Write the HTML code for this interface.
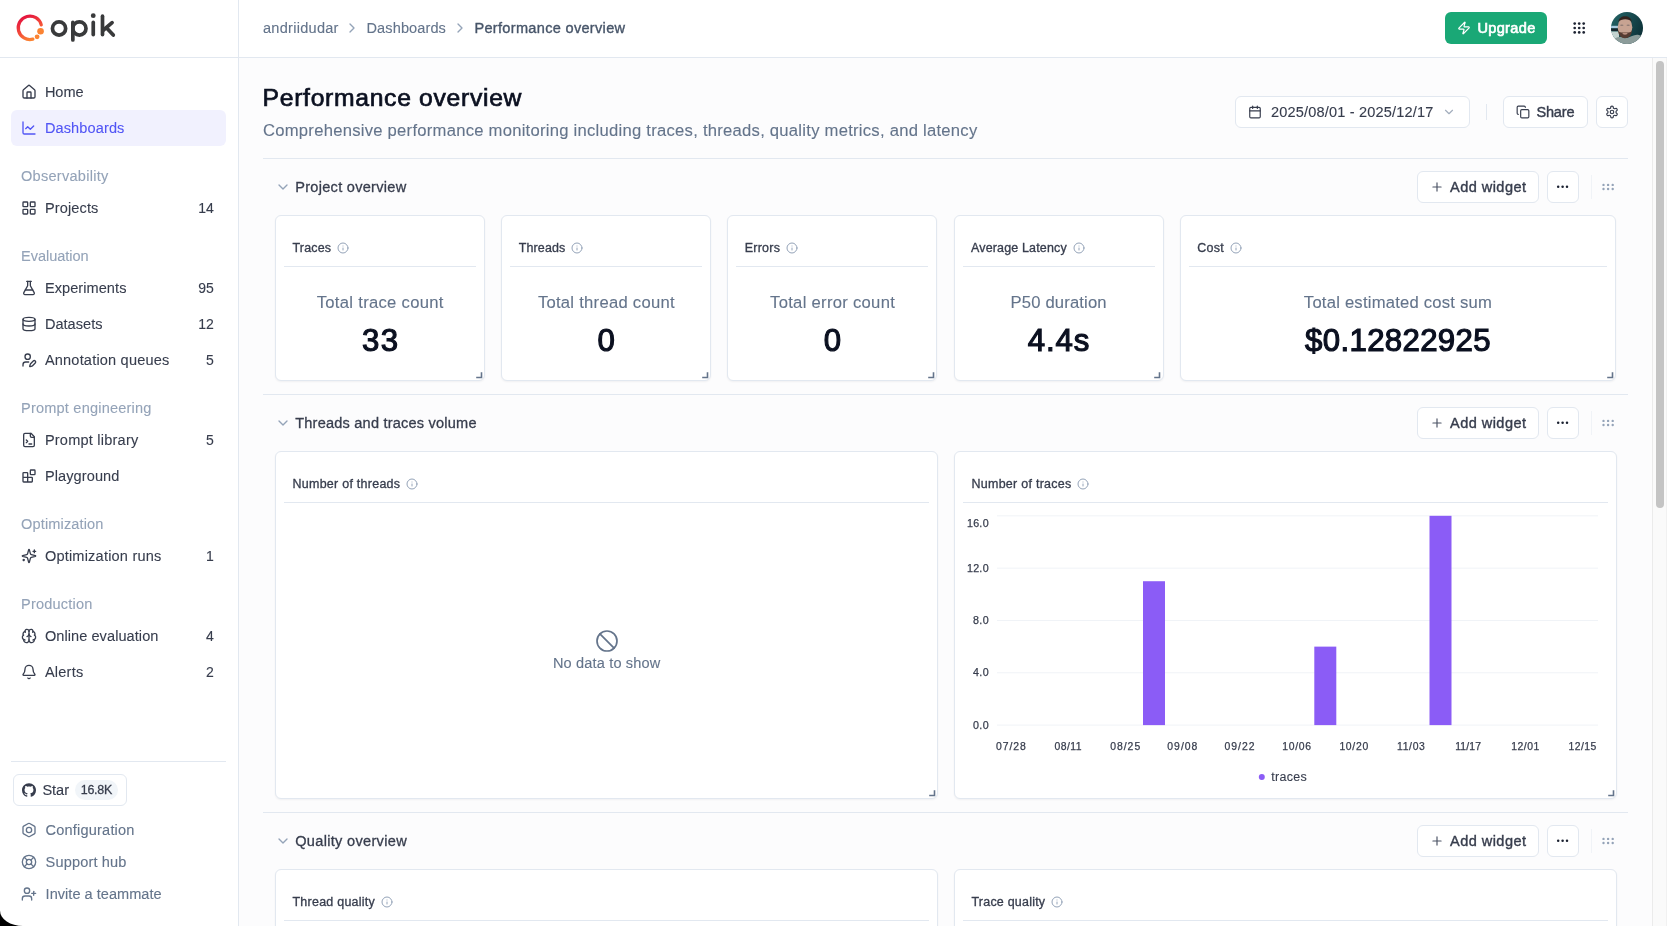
<!DOCTYPE html>
<html lang="en"><head><meta charset="utf-8"><title>Opik - Performance overview</title>
<style>
html,body{margin:0;padding:0;background:#fff}
body{width:1667px;height:926px;overflow:hidden;position:relative;font-family:"Liberation Sans",sans-serif}
.b,.i,.t{position:absolute;box-sizing:border-box}
.i{overflow:visible}
.t{white-space:pre;line-height:20px;height:20px;font-family:"Liberation Sans",sans-serif}
</style></head>
<body>
<div class="b" style="left:239px;top:58px;width:1428px;height:868px;background:#fcfcfd"></div>
<div class="b" style="left:0px;top:57px;width:1667px;height:1px;background:#e2e8f0"></div>
<div class="b" style="left:238px;top:0px;width:1px;height:926px;background:#e2e8f0"></div>
<svg class="i" style="left:0;top:0" width="239" height="57" viewBox="0 0 239 57">
<defs><linearGradient id="lg" x1="0.15" y1="0.1" x2="0.6" y2="1"><stop offset="0" stop-color="#e5173f"/><stop offset="0.5" stop-color="#f2473a"/><stop offset="1" stop-color="#fb8332"/></linearGradient></defs>
<path d="M 41.25 24.9 A 11.7 11.7 0 1 0 32.9 39.1" fill="none" stroke="url(#lg)" stroke-width="3.25" stroke-linecap="round"/>
<circle cx="40.55" cy="31.25" r="3.3" fill="#fb8332"/>
<circle cx="37.1" cy="36.85" r="2.4" fill="#fb8332"/>
<g fill="none" stroke="#393a3b" stroke-width="3.7" stroke-linecap="round" stroke-linejoin="round">
<circle cx="59.05" cy="28.45" r="6.6"/>
<circle cx="79.4" cy="28.45" r="6.6"/>
<path d="M72.85 22.4 V40.0"/>
<path d="M93.25 22.4 V34.6"/>
<path d="M102.5 16.2 V34.6"/>
<path d="M112.1 22.6 L102.9 30.5 M106.4 27.7 L113.3 35.1"/>
</g>
<circle cx="93.25" cy="15.7" r="2.4" fill="#393a3b"/>
</svg>
<svg class="i" style="left:21.00px;top:84.00px" width="16" height="16" viewBox="0 0 24 24" fill="none" stroke="#373d4d" stroke-width="2" stroke-linecap="round" stroke-linejoin="round"><path d="M15 21v-8a1 1 0 0 0-1-1h-4a1 1 0 0 0-1 1v8"/><path d="M3 10a2 2 0 0 1 .709-1.528l7-5.999a2 2 0 0 1 2.582 0l7 5.999A2 2 0 0 1 21 10v9a2 2 0 0 1-2 2H5a2 2 0 0 1-2-2z"/></svg>
<div class="b" style="left:11px;top:110px;width:215px;height:36px;background:#f1f1fe;border-radius:6px;"></div>
<svg class="i" style="left:21.00px;top:120.00px" width="16" height="16" viewBox="0 0 24 24" fill="none" stroke="#5155f5" stroke-width="2" stroke-linecap="round" stroke-linejoin="round"><path d="M3 3v16a2 2 0 0 0 2 2h16"/><path d="m19 9-5 5-4-4-3 3"/></svg>
<svg class="i" style="left:21.00px;top:200.00px" width="16" height="16" viewBox="0 0 24 24" fill="none" stroke="#373d4d" stroke-width="2" stroke-linecap="round" stroke-linejoin="round"><rect width="7" height="7" x="3" y="3" rx="1"/><rect width="7" height="7" x="14" y="3" rx="1"/><rect width="7" height="7" x="14" y="14" rx="1"/><rect width="7" height="7" x="3" y="14" rx="1"/></svg>
<svg class="i" style="left:21.00px;top:280.00px" width="16" height="16" viewBox="0 0 24 24" fill="none" stroke="#373d4d" stroke-width="2" stroke-linecap="round" stroke-linejoin="round"><path d="M14 2v6a2 2 0 0 0 .245.96l5.51 10.08A2 2 0 0 1 18 22H6a2 2 0 0 1-1.755-2.96l5.51-10.08A2 2 0 0 0 10 8V2"/><path d="M6.453 15h11.094"/><path d="M8.5 2h7"/></svg>
<svg class="i" style="left:21.00px;top:316.00px" width="16" height="16" viewBox="0 0 24 24" fill="none" stroke="#373d4d" stroke-width="2" stroke-linecap="round" stroke-linejoin="round"><ellipse cx="12" cy="5" rx="9" ry="3"/><path d="M3 5V19A9 3 0 0 0 21 19V5"/><path d="M3 12A9 3 0 0 0 21 12"/></svg>
<svg class="i" style="left:21.00px;top:352.00px" width="16" height="16" viewBox="0 0 24 24" fill="none" stroke="#373d4d" stroke-width="2" stroke-linecap="round" stroke-linejoin="round"><path d="M11.5 15H7a4 4 0 0 0-4 4v2"/><path d="M21.378 16.626a1 1 0 0 0-3.004-3.004l-4.01 4.012a2 2 0 0 0-.506.854l-.837 2.87a.5.5 0 0 0 .62.62l2.87-.837a2 2 0 0 0 .854-.506z"/><circle cx="10" cy="7" r="4"/></svg>
<svg class="i" style="left:21.00px;top:432.00px" width="16" height="16" viewBox="0 0 24 24" fill="none" stroke="#373d4d" stroke-width="2" stroke-linecap="round" stroke-linejoin="round"><path d="M15 2H6a2 2 0 0 0-2 2v16a2 2 0 0 0 2 2h12a2 2 0 0 0 2-2V7Z"/><path d="M14 2v4a2 2 0 0 0 2 2h4"/><path d="m8 16 2-2-2-2"/><path d="M12 18h4"/></svg>
<svg class="i" style="left:21.00px;top:468.00px" width="16" height="16" viewBox="0 0 24 24" fill="none" stroke="#373d4d" stroke-width="2" stroke-linecap="round" stroke-linejoin="round"><rect width="7" height="7" x="14" y="3" rx="1"/><path d="M10 21V8a1 1 0 0 0-1-1H4a1 1 0 0 0-1 1v12a1 1 0 0 0 1 1h12a1 1 0 0 0 1-1v-5a1 1 0 0 0-1-1H3"/></svg>
<svg class="i" style="left:21.00px;top:548.00px" width="16" height="16" viewBox="0 0 24 24" fill="none" stroke="#373d4d" stroke-width="2" stroke-linecap="round" stroke-linejoin="round"><path d="M9.937 15.5A2 2 0 0 0 8.5 14.063l-6.135-1.582a.5.5 0 0 1 0-.962L8.5 9.936A2 2 0 0 0 9.937 8.5l1.582-6.135a.5.5 0 0 1 .963 0L14.063 8.5A2 2 0 0 0 15.5 9.937l6.135 1.581a.5.5 0 0 1 0 .964L15.5 14.063a2 2 0 0 0-1.437 1.437l-1.582 6.135a.5.5 0 0 1-.963 0z"/><path d="M20 3v4"/><path d="M22 5h-4"/><path d="M4 17v2"/><path d="M5 18H3"/></svg>
<svg class="i" style="left:21.00px;top:628.00px" width="16" height="16" viewBox="0 0 24 24" fill="none" stroke="#373d4d" stroke-width="2" stroke-linecap="round" stroke-linejoin="round"><path d="M12 18V5"/><path d="M15 13a4.17 4.17 0 0 1-3-4 4.17 4.17 0 0 1-3 4"/><path d="M17.598 6.5A3 3 0 1 0 12 5a3 3 0 1 0-5.598 1.5"/><path d="M17.997 5.125a4 4 0 0 1 2.526 5.77"/><path d="M18 18a4 4 0 0 0 2-7.464"/><path d="M19.967 17.483A4 4 0 1 1 12 18a4 4 0 1 1-7.967-.517"/><path d="M6 18a4 4 0 0 1-2-7.464"/><path d="M6.003 5.125a4 4 0 0 0-2.526 5.77"/></svg>
<svg class="i" style="left:21.00px;top:664.00px" width="16" height="16" viewBox="0 0 24 24" fill="none" stroke="#373d4d" stroke-width="2" stroke-linecap="round" stroke-linejoin="round"><path d="M10.268 21a2 2 0 0 0 3.464 0"/><path d="M3.262 15.326A1 1 0 0 0 4 17h16a1 1 0 0 0 .74-1.673C19.41 13.956 18 12.499 18 8A6 6 0 0 0 6 8c0 4.499-1.411 5.956-2.738 7.326"/></svg>
<div class="b" style="left:11px;top:761px;width:215px;height:1px;background:#e2e8f0"></div>
<div class="b" style="left:13px;top:774px;width:114px;height:32px;background:#fff;border:1px solid #e2e8f0;border-radius:6px;"></div>
<svg class="i" style="left:22px;top:783px" width="14" height="14" viewBox="0 0 24 24"><path fill="#373d4d" d="M12 .297c-6.63 0-12 5.373-12 12 0 5.303 3.438 9.8 8.205 11.385.6.113.82-.258.82-.577 0-.285-.01-1.04-.015-2.04-3.338.724-4.042-1.61-4.042-1.61C4.422 18.07 3.633 17.7 3.633 17.7c-1.087-.744.084-.729.084-.729 1.205.084 1.838 1.236 1.838 1.236 1.07 1.835 2.809 1.305 3.495.998.108-.776.417-1.305.76-1.605-2.665-.3-5.466-1.332-5.466-5.93 0-1.31.465-2.38 1.235-3.22-.135-.303-.54-1.523.105-3.176 0 0 1.005-.322 3.3 1.23.96-.267 1.98-.399 3-.405 1.02.006 2.04.138 3 .405 2.28-1.552 3.285-1.23 3.285-1.23.645 1.653.24 2.873.12 3.176.765.84 1.23 1.91 1.23 3.22 0 4.61-2.805 5.625-5.475 5.92.42.36.81 1.096.81 2.22 0 1.606-.015 2.896-.015 3.286 0 .315.21.69.825.57C20.565 22.092 24 17.592 24 12.297c0-6.627-5.373-12-12-12"/></svg>
<div class="b" style="left:75px;top:780px;width:43px;height:20px;background:#f1f5f9;border-radius:10px;"></div>
<svg class="i" style="left:21.00px;top:822.00px" width="16" height="16" viewBox="0 0 24 24" fill="none" stroke="#64748b" stroke-width="2" stroke-linecap="round" stroke-linejoin="round"><path d="M21 16V8a2 2 0 0 0-1-1.73l-7-4a2 2 0 0 0-2 0l-7 4A2 2 0 0 0 3 8v8a2 2 0 0 0 1 1.73l7 4a2 2 0 0 0 2 0l7-4A2 2 0 0 0 21 16z"/><circle cx="12" cy="12" r="4"/></svg>
<svg class="i" style="left:21.00px;top:854.00px" width="16" height="16" viewBox="0 0 24 24" fill="none" stroke="#64748b" stroke-width="2" stroke-linecap="round" stroke-linejoin="round"><circle cx="12" cy="12" r="10"/><path d="m4.93 4.93 4.24 4.24"/><path d="m14.83 9.17 4.24-4.24"/><path d="m14.83 14.83 4.24 4.24"/><path d="m9.17 14.83-4.24 4.24"/><circle cx="12" cy="12" r="4"/></svg>
<svg class="i" style="left:21.00px;top:886.00px" width="16" height="16" viewBox="0 0 24 24" fill="none" stroke="#64748b" stroke-width="2" stroke-linecap="round" stroke-linejoin="round"><path d="M16 21v-2a4 4 0 0 0-4-4H6a4 4 0 0 0-4 4v2"/><circle cx="9" cy="7" r="4"/><line x1="19" x2="19" y1="8" y2="14"/><line x1="22" x2="16" y1="11" y2="11"/></svg>
<svg class="i" style="left:344.20px;top:20.00px" width="16" height="16" viewBox="0 0 24 24" fill="none" stroke="#94a3b8" stroke-width="2" stroke-linecap="round" stroke-linejoin="round"><path d="m9 18 6-6-6-6"/></svg>
<svg class="i" style="left:452.10px;top:20.00px" width="16" height="16" viewBox="0 0 24 24" fill="none" stroke="#94a3b8" stroke-width="2" stroke-linecap="round" stroke-linejoin="round"><path d="m9 18 6-6-6-6"/></svg>
<div class="b" style="left:1445px;top:12px;width:102px;height:32px;background:#1aa876;border-radius:6px;"></div>
<svg class="i" style="left:1457.00px;top:21.00px" width="14" height="14" viewBox="0 0 24 24" fill="none" stroke="#fff" stroke-width="2" stroke-linecap="round" stroke-linejoin="round"><path d="M4 14a1 1 0 0 1-.78-1.63l9.9-10.2a.5.5 0 0 1 .86.46l-1.92 6.02A1 1 0 0 0 13 10h7a1 1 0 0 1 .78 1.63l-9.9 10.2a.5.5 0 0 1-.86-.46l1.92-6.02A1 1 0 0 0 11 14z"/></svg>
<svg class="i" style="left:0;top:0" width="1667" height="57"><circle cx="1574.7" cy="23.6" r="1.35" fill="#1e2433"/><circle cx="1574.7" cy="28.0" r="1.35" fill="#1e2433"/><circle cx="1574.7" cy="32.4" r="1.35" fill="#1e2433"/><circle cx="1579.2" cy="23.6" r="1.35" fill="#1e2433"/><circle cx="1579.2" cy="28.0" r="1.35" fill="#1e2433"/><circle cx="1579.2" cy="32.4" r="1.35" fill="#1e2433"/><circle cx="1583.7" cy="23.6" r="1.35" fill="#1e2433"/><circle cx="1583.7" cy="28.0" r="1.35" fill="#1e2433"/><circle cx="1583.7" cy="32.4" r="1.35" fill="#1e2433"/></svg>
<svg class="i" style="left:1611px;top:12px" width="32" height="32" viewBox="0 0 32 32">
<defs><clipPath id="av"><circle cx="16" cy="16" r="16"/></clipPath>
<filter id="bl" x="-20%" y="-20%" width="140%" height="140%"><feGaussianBlur stdDeviation="0.7"/></filter>
<linearGradient id="avbg" x1="0" y1="0.2" x2="1" y2="0.6"><stop offset="0" stop-color="#236163"/><stop offset="0.55" stop-color="#174a4f"/><stop offset="1" stop-color="#0d3238"/></linearGradient></defs>
<g clip-path="url(#av)">
<rect width="32" height="32" fill="url(#avbg)"/>
<g filter="url(#bl)">
<rect x="-2" y="13.8" width="9.5" height="2.6" fill="#a9cbe0"/>
<rect x="-2" y="16.4" width="9.5" height="2.6" fill="#13272e"/>
<path d="M-2 19.5 H8 V27 L-2 30 Z" fill="#c3d3d0"/>
<path d="M-2 34 L4 26.5 C8 24 12 25.5 16 26 C20 25 23 22.3 27 22.8 L34 25 V34 Z" fill="#8c9c9a"/>
<ellipse cx="14" cy="15.2" rx="7.3" ry="10" fill="#c7a392"/>
<path d="M7.4 10 C7.6 2.2 20.4 2.2 20.8 10 C18.5 6.4 10 6.4 7.4 10 Z" fill="#33241f"/>
<path d="M7.0 18 C7.2 29 20.8 29 21 18 C19.5 21.6 17.5 20.2 14 20.2 C10.5 20.2 8.5 21.6 7.0 18 Z" fill="#553b30"/>
<ellipse cx="14" cy="21.6" rx="2.6" ry="1.1" fill="#b98f80"/>
<ellipse cx="10.8" cy="13.2" rx="1.7" ry="0.8" fill="#8e7a74"/>
<ellipse cx="17.2" cy="13.2" rx="1.7" ry="0.8" fill="#8e7a74"/>
</g>
</g></svg>
<div class="b" style="left:1235px;top:96px;width:235px;height:32px;background:#fff;border:1px solid #e2e8f0;border-radius:6px;"></div>
<svg class="i" style="left:1248.00px;top:105.00px" width="14" height="14" viewBox="0 0 24 24" fill="none" stroke="#373d4d" stroke-width="2" stroke-linecap="round" stroke-linejoin="round"><path d="M8 2v4"/><path d="M16 2v4"/><rect width="18" height="18" x="3" y="4" rx="2"/><path d="M3 10h18"/></svg>
<svg class="i" style="left:1442.00px;top:105.00px" width="14" height="14" viewBox="0 0 24 24" fill="none" stroke="#a3aebd" stroke-width="2" stroke-linecap="round" stroke-linejoin="round"><path d="m6 9 6 6 6-6"/></svg>
<div class="b" style="left:1486px;top:104px;width:1px;height:16px;background:#e2e8f0"></div>
<div class="b" style="left:1503px;top:96px;width:85px;height:32px;background:#fff;border:1px solid #e2e8f0;border-radius:6px;"></div>
<svg class="i" style="left:1515.60px;top:105.00px" width="14" height="14" viewBox="0 0 24 24" fill="none" stroke="#373d4d" stroke-width="2" stroke-linecap="round" stroke-linejoin="round"><rect width="14" height="14" x="8" y="8" rx="2" ry="2"/><path d="M4 16c-1.1 0-2-.9-2-2V4c0-1.1.9-2 2-2h10c1.1 0 2 .9 2 2"/></svg>
<div class="b" style="left:1596px;top:96px;width:32px;height:32px;background:#fff;border:1px solid #e2e8f0;border-radius:6px;"></div>
<svg class="i" style="left:1604.50px;top:105.00px" width="14" height="14" viewBox="0 0 24 24" fill="none" stroke="#373d4d" stroke-width="2" stroke-linecap="round" stroke-linejoin="round"><path d="M12.22 2h-.44a2 2 0 0 0-2 2v.18a2 2 0 0 1-1 1.73l-.43.25a2 2 0 0 1-2 0l-.15-.08a2 2 0 0 0-2.73.73l-.22.38a2 2 0 0 0 .73 2.73l.15.1a2 2 0 0 1 1 1.72v.51a2 2 0 0 1-1 1.74l-.15.09a2 2 0 0 0-.73 2.73l.22.38a2 2 0 0 0 2.73.73l.15-.08a2 2 0 0 1 2 0l.43.25a2 2 0 0 1 1 1.73V20a2 2 0 0 0 2 2h.44a2 2 0 0 0 2-2v-.18a2 2 0 0 1 1-1.73l.43-.25a2 2 0 0 1 2 0l.15.08a2 2 0 0 0 2.73-.73l.22-.39a2 2 0 0 0-.73-2.73l-.15-.08a2 2 0 0 1-1-1.74v-.5a2 2 0 0 1 1-1.74l.15-.09a2 2 0 0 0 .73-2.73l-.22-.38a2 2 0 0 0-2.73-.73l-.15.08a2 2 0 0 1-2 0l-.43-.25a2 2 0 0 1-1-1.73V4a2 2 0 0 0-2-2z"/><circle cx="12" cy="12" r="3"/></svg>
<div class="b" style="left:263px;top:158px;width:1365px;height:1px;background:#e2e8f0"></div>
<svg class="i" style="left:275.20px;top:179.00px" width="16" height="16" viewBox="0 0 24 24" fill="none" stroke="#94a3b8" stroke-width="2" stroke-linecap="round" stroke-linejoin="round"><path d="m6 9 6 6 6-6"/></svg>
<div class="b" style="left:1417px;top:171px;width:122px;height:32px;background:#fff;border:1px solid #e2e8f0;border-radius:6px;"></div>
<svg class="i" style="left:1430.00px;top:180.00px" width="14" height="14" viewBox="0 0 24 24" fill="none" stroke="#4b5264" stroke-width="2" stroke-linecap="round" stroke-linejoin="round"><path d="M5 12h14"/><path d="M12 5v14"/></svg>
<div class="b" style="left:1547px;top:171px;width:32px;height:32px;background:#fff;border:1px solid #e2e8f0;border-radius:6px;"></div>
<div class="b" style="left:1591px;top:175px;width:1px;height:24px;background:#f0f3f7"></div>
<svg class="i" style="left:0;top:0" width="1667" height="926"><circle cx="1558.2" cy="186.8" r="1.25" fill="#1a2030"/><circle cx="1562.6" cy="186.8" r="1.25" fill="#1a2030"/><circle cx="1567.0" cy="186.8" r="1.25" fill="#1a2030"/><circle cx="1603.5" cy="184.9" r="1.2" fill="#94a3b8"/><circle cx="1603.5" cy="189.0" r="1.2" fill="#94a3b8"/><circle cx="1608.1" cy="184.9" r="1.2" fill="#94a3b8"/><circle cx="1608.1" cy="189.0" r="1.2" fill="#94a3b8"/><circle cx="1612.7" cy="184.9" r="1.2" fill="#94a3b8"/><circle cx="1612.7" cy="189.0" r="1.2" fill="#94a3b8"/></svg>
<div class="b" style="left:275.0px;top:215px;width:210.17px;height:166px;background:#fff;border:1px solid #e2e8f0;border-radius:6px;box-sizing:border-box;box-shadow:0 1px 2px rgba(15,23,42,0.05);"></div>
<svg class="i" style="left:337.10px;top:241.80px" width="12" height="12" viewBox="0 0 24 24" fill="none" stroke="#94a3b8" stroke-width="2" stroke-linecap="round" stroke-linejoin="round"><circle cx="12" cy="12" r="10"/><path d="M12 16v-4"/><path d="M12 8h.01"/></svg>
<div class="b" style="left:284.0px;top:266px;width:192.17px;height:1px;background:#e2e8f0"></div>
<svg class="i" style="left:472.77px;top:368.60px" width="10" height="10" viewBox="0 0 10 10"><path d="M8.5 3.2 V8.5 H3.2" fill="none" stroke="#64748b" stroke-width="1.6"/></svg>
<div class="b" style="left:501.16999999999996px;top:215px;width:210.17px;height:166px;background:#fff;border:1px solid #e2e8f0;border-radius:6px;box-sizing:border-box;box-shadow:0 1px 2px rgba(15,23,42,0.05);"></div>
<svg class="i" style="left:571.27px;top:241.80px" width="12" height="12" viewBox="0 0 24 24" fill="none" stroke="#94a3b8" stroke-width="2" stroke-linecap="round" stroke-linejoin="round"><circle cx="12" cy="12" r="10"/><path d="M12 16v-4"/><path d="M12 8h.01"/></svg>
<div class="b" style="left:510.16999999999996px;top:266px;width:192.17px;height:1px;background:#e2e8f0"></div>
<svg class="i" style="left:698.94px;top:368.60px" width="10" height="10" viewBox="0 0 10 10"><path d="M8.5 3.2 V8.5 H3.2" fill="none" stroke="#64748b" stroke-width="1.6"/></svg>
<div class="b" style="left:727.3399999999999px;top:215px;width:210.17px;height:166px;background:#fff;border:1px solid #e2e8f0;border-radius:6px;box-sizing:border-box;box-shadow:0 1px 2px rgba(15,23,42,0.05);"></div>
<svg class="i" style="left:785.94px;top:241.80px" width="12" height="12" viewBox="0 0 24 24" fill="none" stroke="#94a3b8" stroke-width="2" stroke-linecap="round" stroke-linejoin="round"><circle cx="12" cy="12" r="10"/><path d="M12 16v-4"/><path d="M12 8h.01"/></svg>
<div class="b" style="left:736.3399999999999px;top:266px;width:192.17px;height:1px;background:#e2e8f0"></div>
<svg class="i" style="left:925.11px;top:368.60px" width="10" height="10" viewBox="0 0 10 10"><path d="M8.5 3.2 V8.5 H3.2" fill="none" stroke="#64748b" stroke-width="1.6"/></svg>
<div class="b" style="left:953.51px;top:215px;width:210.17px;height:166px;background:#fff;border:1px solid #e2e8f0;border-radius:6px;box-sizing:border-box;box-shadow:0 1px 2px rgba(15,23,42,0.05);"></div>
<svg class="i" style="left:1072.61px;top:241.80px" width="12" height="12" viewBox="0 0 24 24" fill="none" stroke="#94a3b8" stroke-width="2" stroke-linecap="round" stroke-linejoin="round"><circle cx="12" cy="12" r="10"/><path d="M12 16v-4"/><path d="M12 8h.01"/></svg>
<div class="b" style="left:962.51px;top:266px;width:192.17px;height:1px;background:#e2e8f0"></div>
<svg class="i" style="left:1151.28px;top:368.60px" width="10" height="10" viewBox="0 0 10 10"><path d="M8.5 3.2 V8.5 H3.2" fill="none" stroke="#64748b" stroke-width="1.6"/></svg>
<div class="b" style="left:1179.6799999999998px;top:215px;width:436.34px;height:166px;background:#fff;border:1px solid #e2e8f0;border-radius:6px;box-sizing:border-box;box-shadow:0 1px 2px rgba(15,23,42,0.05);"></div>
<svg class="i" style="left:1229.78px;top:241.80px" width="12" height="12" viewBox="0 0 24 24" fill="none" stroke="#94a3b8" stroke-width="2" stroke-linecap="round" stroke-linejoin="round"><circle cx="12" cy="12" r="10"/><path d="M12 16v-4"/><path d="M12 8h.01"/></svg>
<div class="b" style="left:1188.6799999999998px;top:266px;width:418.34px;height:1px;background:#e2e8f0"></div>
<svg class="i" style="left:1603.62px;top:368.60px" width="10" height="10" viewBox="0 0 10 10"><path d="M8.5 3.2 V8.5 H3.2" fill="none" stroke="#64748b" stroke-width="1.6"/></svg>
<div class="b" style="left:263px;top:394px;width:1365px;height:1px;background:#e2e8f0"></div>
<svg class="i" style="left:275.20px;top:415.00px" width="16" height="16" viewBox="0 0 24 24" fill="none" stroke="#94a3b8" stroke-width="2" stroke-linecap="round" stroke-linejoin="round"><path d="m6 9 6 6 6-6"/></svg>
<div class="b" style="left:1417px;top:407px;width:122px;height:32px;background:#fff;border:1px solid #e2e8f0;border-radius:6px;"></div>
<svg class="i" style="left:1430.00px;top:416.00px" width="14" height="14" viewBox="0 0 24 24" fill="none" stroke="#4b5264" stroke-width="2" stroke-linecap="round" stroke-linejoin="round"><path d="M5 12h14"/><path d="M12 5v14"/></svg>
<div class="b" style="left:1547px;top:407px;width:32px;height:32px;background:#fff;border:1px solid #e2e8f0;border-radius:6px;"></div>
<div class="b" style="left:1591px;top:411px;width:1px;height:24px;background:#f0f3f7"></div>
<svg class="i" style="left:0;top:0" width="1667" height="926"><circle cx="1558.2" cy="422.8" r="1.25" fill="#1a2030"/><circle cx="1562.6" cy="422.8" r="1.25" fill="#1a2030"/><circle cx="1567.0" cy="422.8" r="1.25" fill="#1a2030"/><circle cx="1603.5" cy="420.9" r="1.2" fill="#94a3b8"/><circle cx="1603.5" cy="425.0" r="1.2" fill="#94a3b8"/><circle cx="1608.1" cy="420.9" r="1.2" fill="#94a3b8"/><circle cx="1608.1" cy="425.0" r="1.2" fill="#94a3b8"/><circle cx="1612.7" cy="420.9" r="1.2" fill="#94a3b8"/><circle cx="1612.7" cy="425.0" r="1.2" fill="#94a3b8"/></svg>
<div class="b" style="left:275px;top:451px;width:663px;height:348px;background:#fff;border:1px solid #e2e8f0;border-radius:6px;box-sizing:border-box;box-shadow:0 1px 2px rgba(15,23,42,0.05);"></div>
<svg class="i" style="left:406.10px;top:477.80px" width="12" height="12" viewBox="0 0 24 24" fill="none" stroke="#94a3b8" stroke-width="2" stroke-linecap="round" stroke-linejoin="round"><circle cx="12" cy="12" r="10"/><path d="M12 16v-4"/><path d="M12 8h.01"/></svg>
<div class="b" style="left:284px;top:502px;width:645px;height:1px;background:#e2e8f0"></div>
<svg class="i" style="left:925.60px;top:786.60px" width="10" height="10" viewBox="0 0 10 10"><path d="M8.5 3.2 V8.5 H3.2" fill="none" stroke="#64748b" stroke-width="1.6"/></svg>
<svg class="i" style="left:595.00px;top:628.80px" width="24" height="24" viewBox="0 0 24 24" fill="none" stroke="#64748b" stroke-width="1.7" stroke-linecap="round" stroke-linejoin="round"><circle cx="12" cy="12" r="10"/><path d="m4.9 4.9 14.2 14.2"/></svg>
<div class="b" style="left:954px;top:451px;width:663px;height:348px;background:#fff;border:1px solid #e2e8f0;border-radius:6px;box-sizing:border-box;box-shadow:0 1px 2px rgba(15,23,42,0.05);"></div>
<svg class="i" style="left:1077.35px;top:477.80px" width="12" height="12" viewBox="0 0 24 24" fill="none" stroke="#94a3b8" stroke-width="2" stroke-linecap="round" stroke-linejoin="round"><circle cx="12" cy="12" r="10"/><path d="M12 16v-4"/><path d="M12 8h.01"/></svg>
<div class="b" style="left:963px;top:502px;width:645px;height:1px;background:#e2e8f0"></div>
<svg class="i" style="left:1604.60px;top:786.60px" width="10" height="10" viewBox="0 0 10 10"><path d="M8.5 3.2 V8.5 H3.2" fill="none" stroke="#64748b" stroke-width="1.6"/></svg>
<svg class="i" style="left:0;top:0" width="1667" height="926"><line x1="997" x2="1598" y1="725.10" y2="725.10" stroke="#f0f3f7" stroke-width="1"/><line x1="997" x2="1598" y1="672.78" y2="672.78" stroke="#f0f3f7" stroke-width="1"/><line x1="997" x2="1598" y1="620.46" y2="620.46" stroke="#f0f3f7" stroke-width="1"/><line x1="997" x2="1598" y1="568.14" y2="568.14" stroke="#f0f3f7" stroke-width="1"/><line x1="997" x2="1598" y1="515.82" y2="515.82" stroke="#f0f3f7" stroke-width="1"/><rect x="1143.0" y="581.22" width="22" height="143.88" fill="#8b5cf6"/><rect x="1314.3" y="646.62" width="22" height="78.48" fill="#8b5cf6"/><rect x="1429.5" y="515.82" width="22" height="209.28" fill="#8b5cf6"/><circle cx="1261.8" cy="777.0" r="3" fill="#8b5cf6"/></svg>
<div class="b" style="left:263px;top:812px;width:1365px;height:1px;background:#e2e8f0"></div>
<svg class="i" style="left:275.20px;top:833.00px" width="16" height="16" viewBox="0 0 24 24" fill="none" stroke="#94a3b8" stroke-width="2" stroke-linecap="round" stroke-linejoin="round"><path d="m6 9 6 6 6-6"/></svg>
<div class="b" style="left:1417px;top:825px;width:122px;height:32px;background:#fff;border:1px solid #e2e8f0;border-radius:6px;"></div>
<svg class="i" style="left:1430.00px;top:834.00px" width="14" height="14" viewBox="0 0 24 24" fill="none" stroke="#4b5264" stroke-width="2" stroke-linecap="round" stroke-linejoin="round"><path d="M5 12h14"/><path d="M12 5v14"/></svg>
<div class="b" style="left:1547px;top:825px;width:32px;height:32px;background:#fff;border:1px solid #e2e8f0;border-radius:6px;"></div>
<div class="b" style="left:1591px;top:829px;width:1px;height:24px;background:#f0f3f7"></div>
<svg class="i" style="left:0;top:0" width="1667" height="926"><circle cx="1558.2" cy="840.8" r="1.25" fill="#1a2030"/><circle cx="1562.6" cy="840.8" r="1.25" fill="#1a2030"/><circle cx="1567.0" cy="840.8" r="1.25" fill="#1a2030"/><circle cx="1603.5" cy="838.9" r="1.2" fill="#94a3b8"/><circle cx="1603.5" cy="843.0" r="1.2" fill="#94a3b8"/><circle cx="1608.1" cy="838.9" r="1.2" fill="#94a3b8"/><circle cx="1608.1" cy="843.0" r="1.2" fill="#94a3b8"/><circle cx="1612.7" cy="838.9" r="1.2" fill="#94a3b8"/><circle cx="1612.7" cy="843.0" r="1.2" fill="#94a3b8"/></svg>
<div class="b" style="left:275px;top:869px;width:663px;height:80px;background:#fff;border:1px solid #e2e8f0;border-radius:6px;box-sizing:border-box;box-shadow:0 1px 2px rgba(15,23,42,0.05);"></div>
<svg class="i" style="left:380.85px;top:895.80px" width="12" height="12" viewBox="0 0 24 24" fill="none" stroke="#94a3b8" stroke-width="2" stroke-linecap="round" stroke-linejoin="round"><circle cx="12" cy="12" r="10"/><path d="M12 16v-4"/><path d="M12 8h.01"/></svg>
<div class="b" style="left:284px;top:920px;width:645px;height:1px;background:#e2e8f0"></div>
<svg class="i" style="left:925.60px;top:936.60px" width="10" height="10" viewBox="0 0 10 10"><path d="M8.5 3.2 V8.5 H3.2" fill="none" stroke="#64748b" stroke-width="1.6"/></svg>
<div class="b" style="left:954px;top:869px;width:663px;height:80px;background:#fff;border:1px solid #e2e8f0;border-radius:6px;box-sizing:border-box;box-shadow:0 1px 2px rgba(15,23,42,0.05);"></div>
<svg class="i" style="left:1051.10px;top:895.80px" width="12" height="12" viewBox="0 0 24 24" fill="none" stroke="#94a3b8" stroke-width="2" stroke-linecap="round" stroke-linejoin="round"><circle cx="12" cy="12" r="10"/><path d="M12 16v-4"/><path d="M12 8h.01"/></svg>
<div class="b" style="left:963px;top:920px;width:645px;height:1px;background:#e2e8f0"></div>
<svg class="i" style="left:1604.60px;top:936.60px" width="10" height="10" viewBox="0 0 10 10"><path d="M8.5 3.2 V8.5 H3.2" fill="none" stroke="#64748b" stroke-width="1.6"/></svg>
<div class="b" style="left:1652px;top:58px;width:15px;height:868px;background:#fafafa;border-left:1px solid #ebebeb;box-sizing:border-box"></div>
<div class="b" style="left:1666px;top:58px;width:1px;height:868px;background:#f1f1f1"></div>
<div class="b" style="left:1656px;top:61px;width:8px;height:447px;background:#c4c4c4;border-radius:4px"></div>
<svg class="i" style="left:0;top:900px" width="40" height="26" viewBox="0 900 40 26"><path d="M0 910.6 A23 15.4 0 0 0 23 926 L0 926 Z" fill="#000"/></svg>
<div class="b" style="left:0;top:0;width:1667px;height:926px;will-change:transform">
<span class="t" style="left:44.90px;top:82.00px;font-size:14.56px;color:#373d4d;letter-spacing:-0.053px;-webkit-text-stroke:0.1px #373d4d;">Home</span>
<span class="t" style="left:44.90px;top:118.00px;font-size:14.56px;color:#5155f5;letter-spacing:0.115px;-webkit-text-stroke:0.1px #5155f5;">Dashboards</span>
<span class="t" style="left:21.00px;top:166.00px;font-size:14.56px;color:#94a3b8;letter-spacing:0.271px;-webkit-text-stroke:0.1px #94a3b8;">Observability</span>
<span class="t" style="left:44.90px;top:198.00px;font-size:14.56px;color:#373d4d;letter-spacing:0.130px;-webkit-text-stroke:0.1px #373d4d;">Projects</span>
<span class="t" style="left:198.22px;top:198.00px;font-size:14.0px;color:#373d4d;-webkit-text-stroke:0.12px #373d4d;">14</span>
<span class="t" style="left:21.00px;top:246.00px;font-size:14.56px;color:#94a3b8;letter-spacing:-0.034px;-webkit-text-stroke:0.1px #94a3b8;">Evaluation</span>
<span class="t" style="left:44.90px;top:278.00px;font-size:14.56px;color:#373d4d;letter-spacing:0.067px;-webkit-text-stroke:0.1px #373d4d;">Experiments</span>
<span class="t" style="left:198.22px;top:278.00px;font-size:14.0px;color:#373d4d;-webkit-text-stroke:0.12px #373d4d;">95</span>
<span class="t" style="left:44.90px;top:314.00px;font-size:14.56px;color:#373d4d;letter-spacing:0.024px;-webkit-text-stroke:0.1px #373d4d;">Datasets</span>
<span class="t" style="left:198.22px;top:314.00px;font-size:14.0px;color:#373d4d;-webkit-text-stroke:0.12px #373d4d;">12</span>
<span class="t" style="left:44.90px;top:350.00px;font-size:14.56px;color:#373d4d;letter-spacing:0.192px;-webkit-text-stroke:0.1px #373d4d;">Annotation queues</span>
<span class="t" style="left:206.00px;top:350.00px;font-size:14.0px;color:#373d4d;-webkit-text-stroke:0.12px #373d4d;">5</span>
<span class="t" style="left:21.00px;top:398.00px;font-size:14.56px;color:#94a3b8;letter-spacing:0.202px;-webkit-text-stroke:0.1px #94a3b8;">Prompt engineering</span>
<span class="t" style="left:44.90px;top:430.00px;font-size:14.56px;color:#373d4d;letter-spacing:0.218px;-webkit-text-stroke:0.1px #373d4d;">Prompt library</span>
<span class="t" style="left:206.00px;top:430.00px;font-size:14.0px;color:#373d4d;-webkit-text-stroke:0.12px #373d4d;">5</span>
<span class="t" style="left:44.90px;top:466.00px;font-size:14.56px;color:#373d4d;letter-spacing:0.099px;-webkit-text-stroke:0.1px #373d4d;">Playground</span>
<span class="t" style="left:21.00px;top:514.00px;font-size:14.56px;color:#94a3b8;letter-spacing:0.145px;-webkit-text-stroke:0.1px #94a3b8;">Optimization</span>
<span class="t" style="left:44.90px;top:546.00px;font-size:14.56px;color:#373d4d;letter-spacing:0.201px;-webkit-text-stroke:0.1px #373d4d;">Optimization runs</span>
<span class="t" style="left:206.00px;top:546.00px;font-size:14.0px;color:#373d4d;-webkit-text-stroke:0.12px #373d4d;">1</span>
<span class="t" style="left:21.00px;top:594.00px;font-size:14.56px;color:#94a3b8;letter-spacing:0.205px;-webkit-text-stroke:0.1px #94a3b8;">Production</span>
<span class="t" style="left:44.90px;top:626.00px;font-size:14.56px;color:#373d4d;letter-spacing:0.069px;-webkit-text-stroke:0.1px #373d4d;">Online evaluation</span>
<span class="t" style="left:206.00px;top:626.00px;font-size:14.0px;color:#373d4d;-webkit-text-stroke:0.12px #373d4d;">4</span>
<span class="t" style="left:44.90px;top:662.00px;font-size:14.56px;color:#373d4d;letter-spacing:0.235px;-webkit-text-stroke:0.1px #373d4d;">Alerts</span>
<span class="t" style="left:206.00px;top:662.00px;font-size:14.0px;color:#373d4d;-webkit-text-stroke:0.12px #373d4d;">2</span>
<span class="t" style="left:42.40px;top:780.00px;font-size:14.56px;color:#373d4d;letter-spacing:-0.022px;-webkit-text-stroke:0.15px #373d4d;">Star</span>
<span class="t" style="left:80.80px;top:780.00px;font-size:12.48px;color:#373d4d;letter-spacing:-0.279px;-webkit-text-stroke:0.28px #373d4d;">16.8K</span>
<span class="t" style="left:45.60px;top:820.00px;font-size:14.56px;color:#64748b;letter-spacing:0.190px;-webkit-text-stroke:0.12px #64748b;">Configuration</span>
<span class="t" style="left:45.60px;top:852.00px;font-size:14.56px;color:#64748b;letter-spacing:0.158px;-webkit-text-stroke:0.12px #64748b;">Support hub</span>
<span class="t" style="left:45.60px;top:884.00px;font-size:14.56px;color:#64748b;letter-spacing:0.022px;-webkit-text-stroke:0.12px #64748b;">Invite a teammate</span>
<span class="t" style="left:263.00px;top:18.00px;font-size:14.56px;color:#64748b;letter-spacing:0.268px;-webkit-text-stroke:0.12px #64748b;">andriidudar</span>
<span class="t" style="left:366.50px;top:18.00px;font-size:14.56px;color:#64748b;letter-spacing:0.105px;-webkit-text-stroke:0.12px #64748b;">Dashboards</span>
<span class="t" style="left:474.40px;top:18.00px;font-size:14.56px;color:#475569;letter-spacing:0.314px;-webkit-text-stroke:0.36px #475569;">Performance overview</span>
<span class="t" style="left:1477.40px;top:18.00px;font-size:14.56px;color:#fff;letter-spacing:0.341px;-webkit-text-stroke:0.65px #fff;">Upgrade</span>
<span class="t" style="left:262.60px;top:87.70px;font-size:24.72px;color:#0b1020;letter-spacing:0.679px;-webkit-text-stroke:0.7px #0b1020;">Performance overview</span>
<span class="t" style="left:263.00px;top:121.00px;font-size:16.64px;color:#64748b;letter-spacing:0.253px;-webkit-text-stroke:0.12px #64748b;">Comprehensive performance monitoring including traces, threads, quality metrics, and latency</span>
<span class="t" style="left:1271.00px;top:102.00px;font-size:14.56px;color:#373d4d;letter-spacing:0.172px;-webkit-text-stroke:0.12px #373d4d;">2025/08/01 - 2025/12/17</span>
<span class="t" style="left:1536.40px;top:102.30px;font-size:14.56px;color:#373d4d;letter-spacing:-0.166px;-webkit-text-stroke:0.38px #373d4d;">Share</span>
<span class="t" style="left:295.20px;top:177.30px;font-size:14.56px;color:#373d4d;letter-spacing:0.286px;-webkit-text-stroke:0.3px #373d4d;">Project overview</span>
<span class="t" style="left:1450.00px;top:177.40px;font-size:14.56px;color:#373d4d;letter-spacing:0.452px;-webkit-text-stroke:0.38px #373d4d;">Add widget</span>
<span class="t" style="left:292.50px;top:238.00px;font-size:12.48px;color:#373d4d;letter-spacing:0.191px;-webkit-text-stroke:0.32px #373d4d;">Traces</span>
<span class="t" style="left:316.73px;top:293.10px;font-size:16.64px;color:#64748b;letter-spacing:0.295px;-webkit-text-stroke:0.12px #64748b;">Total trace count</span>
<span class="t" style="left:362.11px;top:330.70px;font-size:31.2px;color:#0b1020;letter-spacing:1.248px;-webkit-text-stroke:1.15px #0b1020;">33</span>
<span class="t" style="left:518.67px;top:238.00px;font-size:12.48px;color:#373d4d;letter-spacing:0.150px;-webkit-text-stroke:0.32px #373d4d;">Threads</span>
<span class="t" style="left:537.89px;top:293.10px;font-size:16.64px;color:#64748b;letter-spacing:0.268px;-webkit-text-stroke:0.12px #64748b;">Total thread count</span>
<span class="t" style="left:597.58px;top:330.70px;font-size:31.2px;color:#0b1020;letter-spacing:3.341px;-webkit-text-stroke:1.15px #0b1020;">0</span>
<span class="t" style="left:744.84px;top:238.00px;font-size:12.48px;color:#373d4d;letter-spacing:0.224px;-webkit-text-stroke:0.32px #373d4d;">Errors</span>
<span class="t" style="left:770.07px;top:293.10px;font-size:16.64px;color:#64748b;letter-spacing:0.287px;-webkit-text-stroke:0.12px #64748b;">Total error count</span>
<span class="t" style="left:823.75px;top:330.70px;font-size:31.2px;color:#0b1020;letter-spacing:3.341px;-webkit-text-stroke:1.15px #0b1020;">0</span>
<span class="t" style="left:971.01px;top:238.00px;font-size:12.48px;color:#373d4d;letter-spacing:0.163px;-webkit-text-stroke:0.32px #373d4d;">Average Latency</span>
<span class="t" style="left:1010.57px;top:293.10px;font-size:16.64px;color:#64748b;letter-spacing:0.160px;-webkit-text-stroke:0.12px #64748b;">P50 duration</span>
<span class="t" style="left:1027.79px;top:330.70px;font-size:31.2px;color:#0b1020;letter-spacing:0.887px;-webkit-text-stroke:1.15px #0b1020;">4.4s</span>
<span class="t" style="left:1197.18px;top:238.00px;font-size:12.48px;color:#373d4d;letter-spacing:0.290px;-webkit-text-stroke:0.32px #373d4d;">Cost</span>
<span class="t" style="left:1303.86px;top:293.10px;font-size:16.64px;color:#64748b;letter-spacing:0.219px;-webkit-text-stroke:0.12px #64748b;">Total estimated cost sum</span>
<span class="t" style="left:1305.12px;top:330.70px;font-size:31.2px;color:#0b1020;letter-spacing:0.334px;-webkit-text-stroke:1.15px #0b1020;">$0.12822925</span>
<span class="t" style="left:295.20px;top:413.30px;font-size:14.56px;color:#373d4d;letter-spacing:0.211px;-webkit-text-stroke:0.3px #373d4d;">Threads and traces volume</span>
<span class="t" style="left:1450.00px;top:413.40px;font-size:14.56px;color:#373d4d;letter-spacing:0.452px;-webkit-text-stroke:0.38px #373d4d;">Add widget</span>
<span class="t" style="left:292.50px;top:474.00px;font-size:12.48px;color:#373d4d;letter-spacing:0.267px;-webkit-text-stroke:0.32px #373d4d;">Number of threads</span>
<span class="t" style="left:552.93px;top:653.20px;font-size:14.56px;color:#64748b;letter-spacing:0.158px;-webkit-text-stroke:0.12px #64748b;">No data to show</span>
<span class="t" style="left:971.50px;top:474.00px;font-size:12.48px;color:#373d4d;letter-spacing:0.276px;-webkit-text-stroke:0.32px #373d4d;">Number of traces</span>
<span class="t" style="left:972.98px;top:714.80px;font-size:10.7px;color:#373d4d;letter-spacing:0.380px;-webkit-text-stroke:0.25px #373d4d;">0.0</span>
<span class="t" style="left:972.98px;top:661.90px;font-size:10.7px;color:#373d4d;letter-spacing:0.380px;-webkit-text-stroke:0.25px #373d4d;">4.0</span>
<span class="t" style="left:972.98px;top:609.50px;font-size:10.7px;color:#373d4d;letter-spacing:0.380px;-webkit-text-stroke:0.25px #373d4d;">8.0</span>
<span class="t" style="left:966.90px;top:557.70px;font-size:10.7px;color:#373d4d;letter-spacing:0.297px;-webkit-text-stroke:0.25px #373d4d;">12.0</span>
<span class="t" style="left:966.90px;top:512.70px;font-size:10.7px;color:#373d4d;letter-spacing:0.297px;-webkit-text-stroke:0.25px #373d4d;">16.0</span>
<span class="t" style="left:995.90px;top:737.40px;font-size:10.4px;color:#373d4d;letter-spacing:0.997px;-webkit-text-stroke:0.25px #373d4d;">07/28</span>
<span class="t" style="left:1054.53px;top:737.40px;font-size:10.4px;color:#373d4d;letter-spacing:0.453px;-webkit-text-stroke:0.25px #373d4d;">08/11</span>
<span class="t" style="left:1110.20px;top:737.40px;font-size:10.4px;color:#373d4d;letter-spacing:0.997px;-webkit-text-stroke:0.25px #373d4d;">08/25</span>
<span class="t" style="left:1167.35px;top:737.40px;font-size:10.4px;color:#373d4d;letter-spacing:0.997px;-webkit-text-stroke:0.25px #373d4d;">09/08</span>
<span class="t" style="left:1224.50px;top:737.40px;font-size:10.4px;color:#373d4d;letter-spacing:0.997px;-webkit-text-stroke:0.25px #373d4d;">09/22</span>
<span class="t" style="left:1282.25px;top:737.40px;font-size:10.4px;color:#373d4d;letter-spacing:0.697px;-webkit-text-stroke:0.25px #373d4d;">10/06</span>
<span class="t" style="left:1339.40px;top:737.40px;font-size:10.4px;color:#373d4d;letter-spacing:0.697px;-webkit-text-stroke:0.25px #373d4d;">10/20</span>
<span class="t" style="left:1397.03px;top:737.40px;font-size:10.4px;color:#373d4d;letter-spacing:0.653px;-webkit-text-stroke:0.25px #373d4d;">11/03</span>
<span class="t" style="left:1455.18px;top:737.40px;font-size:10.4px;color:#373d4d;letter-spacing:0.153px;-webkit-text-stroke:0.25px #373d4d;">11/17</span>
<span class="t" style="left:1511.25px;top:737.40px;font-size:10.4px;color:#373d4d;letter-spacing:0.497px;-webkit-text-stroke:0.25px #373d4d;">12/01</span>
<span class="t" style="left:1568.60px;top:737.40px;font-size:10.4px;color:#373d4d;letter-spacing:0.397px;-webkit-text-stroke:0.25px #373d4d;">12/15</span>
<span class="t" style="left:1271.20px;top:767.00px;font-size:12.48px;color:#373d4d;letter-spacing:0.305px;-webkit-text-stroke:0.12px #373d4d;">traces</span>
<span class="t" style="left:295.20px;top:831.30px;font-size:14.56px;color:#373d4d;letter-spacing:0.318px;-webkit-text-stroke:0.3px #373d4d;">Quality overview</span>
<span class="t" style="left:1450.00px;top:831.40px;font-size:14.56px;color:#373d4d;letter-spacing:0.452px;-webkit-text-stroke:0.38px #373d4d;">Add widget</span>
<span class="t" style="left:292.50px;top:892.00px;font-size:12.48px;color:#373d4d;letter-spacing:0.252px;-webkit-text-stroke:0.32px #373d4d;">Thread quality</span>
<span class="t" style="left:971.50px;top:892.00px;font-size:12.48px;color:#373d4d;letter-spacing:0.221px;-webkit-text-stroke:0.32px #373d4d;">Trace quality</span>
</div>
</body></html>
